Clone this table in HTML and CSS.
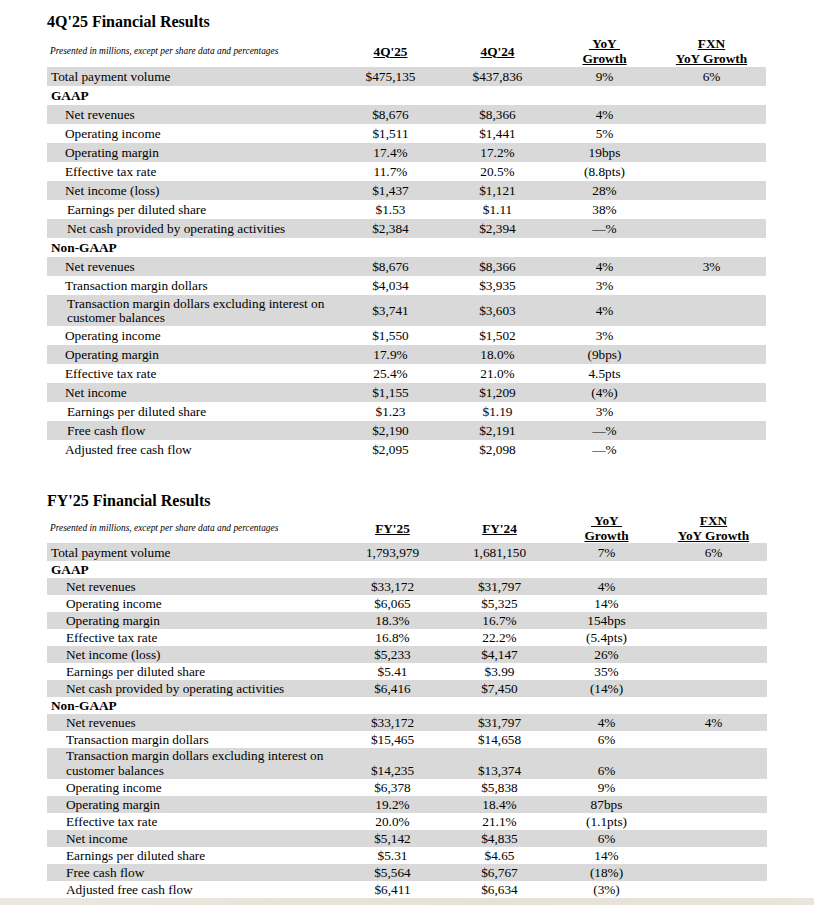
FILE: index.html
```html
<!DOCTYPE html>
<html lang="en">
<head>
<meta charset="utf-8">
<title>Financial Results</title>
<link rel="stylesheet" href="styles.css">
</head>
<body>
<main class="page">
  <section class="report q4">
    <h2 class="title">4Q'25 Financial Results</h2>
    <div class="fin-table">
      <div class="row head">
        <div class="label note">Presented in millions, except per share data and percentages</div>
        <div class="cell"><u>4Q'25</u></div>
        <div class="cell"><u>4Q'24</u></div>
        <div class="cell"><u>&nbsp;YoY&nbsp;</u><br><u>Growth</u></div>
        <div class="cell"><u>FXN</u><br><u>YoY Growth</u></div>
      </div>
      <div class="row shade"><div class="label">Total payment volume</div><div class="cell">$475,135</div><div class="cell">$437,836</div><div class="cell">9%</div><div class="cell">6%</div></div>
      <div class="row"><div class="label group">GAAP</div></div>
      <div class="row shade"><div class="label ind">Net revenues</div><div class="cell">$8,676</div><div class="cell">$8,366</div><div class="cell">4%</div><div class="cell"></div></div>
      <div class="row"><div class="label ind">Operating income</div><div class="cell">$1,511</div><div class="cell">$1,441</div><div class="cell">5%</div><div class="cell"></div></div>
      <div class="row shade"><div class="label ind">Operating margin</div><div class="cell">17.4%</div><div class="cell">17.2%</div><div class="cell">19bps</div><div class="cell"></div></div>
      <div class="row"><div class="label ind">Effective tax rate</div><div class="cell">11.7%</div><div class="cell">20.5%</div><div class="cell">(8.8pts)</div><div class="cell"></div></div>
      <div class="row shade"><div class="label ind">Net income (loss)</div><div class="cell">$1,437</div><div class="cell">$1,121</div><div class="cell">28%</div><div class="cell"></div></div>
      <div class="row"><div class="label ind2">Earnings per diluted share</div><div class="cell">$1.53</div><div class="cell">$1.11</div><div class="cell">38%</div><div class="cell"></div></div>
      <div class="row shade"><div class="label ind2">Net cash provided by operating activities</div><div class="cell">$2,384</div><div class="cell">$2,394</div><div class="cell">—%</div><div class="cell"></div></div>
      <div class="row"><div class="label group">Non-GAAP</div></div>
      <div class="row shade"><div class="label ind">Net revenues</div><div class="cell">$8,676</div><div class="cell">$8,366</div><div class="cell">4%</div><div class="cell">3%</div></div>
      <div class="row"><div class="label ind">Transaction margin dollars</div><div class="cell">$4,034</div><div class="cell">$3,935</div><div class="cell">3%</div><div class="cell"></div></div>
      <div class="row shade tall"><div class="label ind2 wrap">Transaction margin dollars excluding interest on customer balances</div><div class="cell">$3,741</div><div class="cell">$3,603</div><div class="cell">4%</div><div class="cell"></div></div>
      <div class="row"><div class="label ind">Operating income</div><div class="cell">$1,550</div><div class="cell">$1,502</div><div class="cell">3%</div><div class="cell"></div></div>
      <div class="row shade"><div class="label ind">Operating margin</div><div class="cell">17.9%</div><div class="cell">18.0%</div><div class="cell">(9bps)</div><div class="cell"></div></div>
      <div class="row"><div class="label ind">Effective tax rate</div><div class="cell">25.4%</div><div class="cell">21.0%</div><div class="cell">4.5pts</div><div class="cell"></div></div>
      <div class="row shade"><div class="label ind">Net income</div><div class="cell">$1,155</div><div class="cell">$1,209</div><div class="cell">(4%)</div><div class="cell"></div></div>
      <div class="row"><div class="label ind2">Earnings per diluted share</div><div class="cell">$1.23</div><div class="cell">$1.19</div><div class="cell">3%</div><div class="cell"></div></div>
      <div class="row shade"><div class="label ind2">Free cash flow</div><div class="cell">$2,190</div><div class="cell">$2,191</div><div class="cell">—%</div><div class="cell"></div></div>
      <div class="row"><div class="label ind">Adjusted free cash flow</div><div class="cell">$2,095</div><div class="cell">$2,098</div><div class="cell">—%</div><div class="cell"></div></div>
    </div>
  </section>

  <section class="report fy">
    <h2 class="title">FY'25 Financial Results</h2>
    <div class="fin-table">
      <div class="row head">
        <div class="label note">Presented in millions, except per share data and percentages</div>
        <div class="cell"><u>FY'25</u></div>
        <div class="cell"><u>FY'24</u></div>
        <div class="cell"><u>&nbsp;YoY&nbsp;</u><br><u>Growth</u></div>
        <div class="cell"><u>FXN</u><br><u>YoY Growth</u></div>
      </div>
      <div class="row shade first"><div class="label">Total payment volume</div><div class="cell">1,793,979</div><div class="cell">1,681,150</div><div class="cell">7%</div><div class="cell">6%</div></div>
      <div class="row"><div class="label group">GAAP</div></div>
      <div class="row shade"><div class="label ind">Net revenues</div><div class="cell">$33,172</div><div class="cell">$31,797</div><div class="cell">4%</div><div class="cell"></div></div>
      <div class="row"><div class="label ind">Operating income</div><div class="cell">$6,065</div><div class="cell">$5,325</div><div class="cell">14%</div><div class="cell"></div></div>
      <div class="row shade"><div class="label ind">Operating margin</div><div class="cell">18.3%</div><div class="cell">16.7%</div><div class="cell">154bps</div><div class="cell"></div></div>
      <div class="row"><div class="label ind">Effective tax rate</div><div class="cell">16.8%</div><div class="cell">22.2%</div><div class="cell">(5.4pts)</div><div class="cell"></div></div>
      <div class="row shade"><div class="label ind">Net income (loss)</div><div class="cell">$5,233</div><div class="cell">$4,147</div><div class="cell">26%</div><div class="cell"></div></div>
      <div class="row"><div class="label ind">Earnings per diluted share</div><div class="cell">$5.41</div><div class="cell">$3.99</div><div class="cell">35%</div><div class="cell"></div></div>
      <div class="row shade"><div class="label ind">Net cash provided by operating activities</div><div class="cell">$6,416</div><div class="cell">$7,450</div><div class="cell">(14%)</div><div class="cell"></div></div>
      <div class="row"><div class="label group">Non-GAAP</div></div>
      <div class="row shade"><div class="label ind">Net revenues</div><div class="cell">$33,172</div><div class="cell">$31,797</div><div class="cell">4%</div><div class="cell">4%</div></div>
      <div class="row"><div class="label ind">Transaction margin dollars</div><div class="cell">$15,465</div><div class="cell">$14,658</div><div class="cell">6%</div><div class="cell"></div></div>
      <div class="row shade tall bottom"><div class="label ind wrap">Transaction margin dollars excluding interest on customer balances</div><div class="cell">$14,235</div><div class="cell">$13,374</div><div class="cell">6%</div><div class="cell"></div></div>
      <div class="row"><div class="label ind">Operating income</div><div class="cell">$6,378</div><div class="cell">$5,838</div><div class="cell">9%</div><div class="cell"></div></div>
      <div class="row shade"><div class="label ind">Operating margin</div><div class="cell">19.2%</div><div class="cell">18.4%</div><div class="cell">87bps</div><div class="cell"></div></div>
      <div class="row"><div class="label ind">Effective tax rate</div><div class="cell">20.0%</div><div class="cell">21.1%</div><div class="cell">(1.1pts)</div><div class="cell"></div></div>
      <div class="row shade"><div class="label ind">Net income</div><div class="cell">$5,142</div><div class="cell">$4,835</div><div class="cell">6%</div><div class="cell"></div></div>
      <div class="row"><div class="label ind">Earnings per diluted share</div><div class="cell">$5.31</div><div class="cell">$4.65</div><div class="cell">14%</div><div class="cell"></div></div>
      <div class="row shade"><div class="label ind">Free cash flow</div><div class="cell">$5,564</div><div class="cell">$6,767</div><div class="cell">(18%)</div><div class="cell"></div></div>
      <div class="row"><div class="label ind">Adjusted free cash flow</div><div class="cell">$6,411</div><div class="cell">$6,634</div><div class="cell">(3%)</div><div class="cell"></div></div>
    </div>
  </section>
  <div class="band"></div>
</main>
</body>
</html>
```

FILE: styles.css
```css
html, body {
  margin: 0;
  padding: 0;
  background: #ffffff;
  overflow: hidden;
}

body {
  font-family: "Liberation Serif", "Times New Roman", serif;
  color: #000000;
}

.page {
  padding-top: 12px;
}

.report {
  padding-left: 47px;
}

.title {
  margin: 0;
  font-size: 16px;
  line-height: 20px;
  font-weight: bold;
}

.fin-table {
  margin-top: 3px;
  width: 719px;
}

.row {
  display: grid;
  grid-template-columns: 290px repeat(4, 107px);
  align-items: center;
  height: 19px;
  font-size: 13.3px;
  line-height: 15px;
}

.shade {
  background: #d9d9d9;
}

.cell {
  text-align: center;
  white-space: nowrap;
}

.head {
  height: 32px;
  font-weight: bold;
}

.head u {
  text-decoration-thickness: 1px;
  text-underline-offset: 1px;
}

.label {
  padding-left: 4px;
  white-space: nowrap;
}

.note {
  padding-left: 3px;
  font-style: italic;
  font-weight: normal;
  font-size: 9.4px;
}

.group {
  font-weight: bold;
}

.ind {
  padding-left: 18px;
}

.ind2 {
  padding-left: 20px;
}

.tall {
  height: 31px;
}

.wrap {
  white-space: normal;
  line-height: 14px;
  padding-right: 10px;
}

/* FY table */
.fy {
  margin-top: 32px;
}

.fy .fin-table {
  margin-top: 2px;
  width: 720px;
}

.fy .row {
  height: 17px;
  grid-template-columns: 292px repeat(4, 107px);
}

.fy .head {
  height: 30px;
}

.fy .row.first {
  height: 18px;
}

.fy .ind {
  padding-left: 19px;
}

.fy .tall {
  height: 31px;
}

.fy .wrap {
  line-height: 15px;
  align-self: start;
  padding-top: 0;
}

.fy .bottom .cell {
  align-self: end;
  padding-bottom: 1px;
}

.band {
  height: 8px;
  background: linear-gradient(90deg, #ebe8e2, #e6e1d7 60%, #e9e5dd);
}
```
